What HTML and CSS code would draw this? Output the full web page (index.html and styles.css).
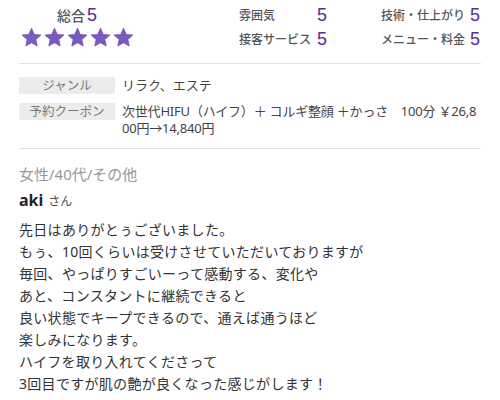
FILE: index.html
```html
<!DOCTYPE html>
<html lang="ja">
<head>
<meta charset="utf-8">
<link rel="stylesheet" href="styles.css">
</head>
<body>
<div class="summary">
  <div class="overall">
    <div class="overall-title">総合<span class="num-big">5</span></div>
    <div class="stars">
      <svg class="star" viewBox="0 0 24 24"><polygon points="12,1.8 15,8.6 22.4,9.3 16.8,14.2 18.4,21.5 12,17.7 5.6,21.5 7.2,14.2 1.6,9.3 9,8.6"/></svg>
      <svg class="star" viewBox="0 0 24 24"><polygon points="12,1.8 15,8.6 22.4,9.3 16.8,14.2 18.4,21.5 12,17.7 5.6,21.5 7.2,14.2 1.6,9.3 9,8.6"/></svg>
      <svg class="star" viewBox="0 0 24 24"><polygon points="12,1.8 15,8.6 22.4,9.3 16.8,14.2 18.4,21.5 12,17.7 5.6,21.5 7.2,14.2 1.6,9.3 9,8.6"/></svg>
      <svg class="star" viewBox="0 0 24 24"><polygon points="12,1.8 15,8.6 22.4,9.3 16.8,14.2 18.4,21.5 12,17.7 5.6,21.5 7.2,14.2 1.6,9.3 9,8.6"/></svg>
      <svg class="star" viewBox="0 0 24 24"><polygon points="12,1.8 15,8.6 22.4,9.3 16.8,14.2 18.4,21.5 12,17.7 5.6,21.5 7.2,14.2 1.6,9.3 9,8.6"/></svg>
    </div>
  </div>
  <div class="scores">
    <div class="score-col col1">
      <span class="score-label">雰囲気</span><span class="score-num">5</span>
      <span class="score-label">接客サービス</span><span class="score-num">5</span>
    </div>
    <div class="score-col col2">
      <span class="score-label">技術・仕上がり</span><span class="score-num">5</span>
      <span class="score-label">メニュー・料金</span><span class="score-num">5</span>
    </div>
  </div>
</div>

<div class="info">
  <div class="info-row">
    <div class="info-label">ジャンル</div>
    <div class="info-value">リラク、エステ</div>
  </div>
  <div class="info-row">
    <div class="info-label">予約クーポン</div>
    <div class="info-value coupon">次世代HIFU（ハイフ）＋ コルギ整顔 ＋かっさ　100分 ￥26,800円→14,840円</div>
  </div>
</div>

<div class="review">
  <div class="reviewer-meta">女性/40代/その他</div>
  <div class="reviewer-name"><span class="name">aki</span><span class="san">さん</span></div>
  <div class="review-body">先日はありがとぅございました。<br>もぅ、10回くらいは受けさせていただいておりますが<br>毎回、やっぱりすごいーって感動する、変化や<br>あと、コンスタントに継続できると<br>良い状態でキープできるので、通えば通うほど<br>楽しみになります。<br>ハイフを取り入れてくださって<br>3回目ですが肌の艶が良くなった感じがします！</div>
</div>
</body>
</html>
```

FILE: styles.css
```css
html, body {
  margin: 0;
  padding: 0;
  background: #ffffff;
}
body {
  padding: 0 19px;
  font-family: "Noto Sans", "Noto Sans CJK JP", sans-serif;
  color: #333;
}
.summary {
  display: flex;
  height: 63px;
  border-bottom: 1px solid #e3e3e3;
}
.overall {
  width: 114px;
  margin-left: 1px;
  display: flex;
  flex-direction: column;
  align-items: center;
  padding-top: 5px;
}
.overall-title {
  font-size: 14px;
  line-height: 20px;
  color: #555;
  font-weight: 500;
  height: 22px;
}
.num-big {
  font-size: 18px;
  color: #5a2a9c;
  margin-left: 2px;
  font-family: "Liberation Sans", sans-serif;
}
.stars {
  display: flex;
  gap: 2px;
}
.star {
  width: 21px;
  height: 21px;
  display: block;
}
.star polygon {
  fill: #7a5bbb;
  stroke: #7a5bbb;
  stroke-width: 1.2;
  stroke-linejoin: round;
}
.scores {
  display: flex;
  gap: 54px;
  margin-left: 105px;
  padding-top: 3px;
}
.score-col {
  display: grid;
  grid-template-rows: 24px 24px;
  align-items: center;
}
.col1 { grid-template-columns: 78px 10px; }
.col2 { grid-template-columns: 89px 10px; }
.score-label {
  font-size: 12px;
  color: #555;
  font-weight: 500;
  white-space: nowrap;
}
.score-num {
  font-family: "Liberation Sans", sans-serif;
  font-size: 18px;
  color: #5a2a9c;
  line-height: 24px;
}
.info {
  padding: 13px 0 11px;
  border-bottom: 1px solid #e3e3e3;
  display: flex;
  flex-direction: column;
  gap: 9px;
}
.info-row {
  display: flex;
  align-items: flex-start;
}
.info-label {
  flex: 0 0 96px;
  background: #ececec;
  color: #777;
  font-size: 12.5px;
  line-height: 17px;
  text-align: center;
}
.info-value {
  margin-left: 7px;
  font-size: 13px;
  line-height: 17px;
  color: #444;
  flex: 1;
}
.coupon {
  word-break: break-all;
  letter-spacing: -0.2px;
}
.review {
  padding-top: 15px;
}
.reviewer-meta {
  font-size: 15px;
  line-height: 20px;
  color: #999;
}
.reviewer-name {
  margin-top: 5px;
  line-height: 22px;
  color: #222;
}
.name {
  font-size: 16px;
  font-weight: 700;
}
.san {
  font-size: 12px;
  margin-left: 5px;
  color: #444;
}
.review-body {
  margin-top: 6px;
  font-size: 14px;
  line-height: 22px;
  letter-spacing: 0.3px;
  color: #333;
}
```
